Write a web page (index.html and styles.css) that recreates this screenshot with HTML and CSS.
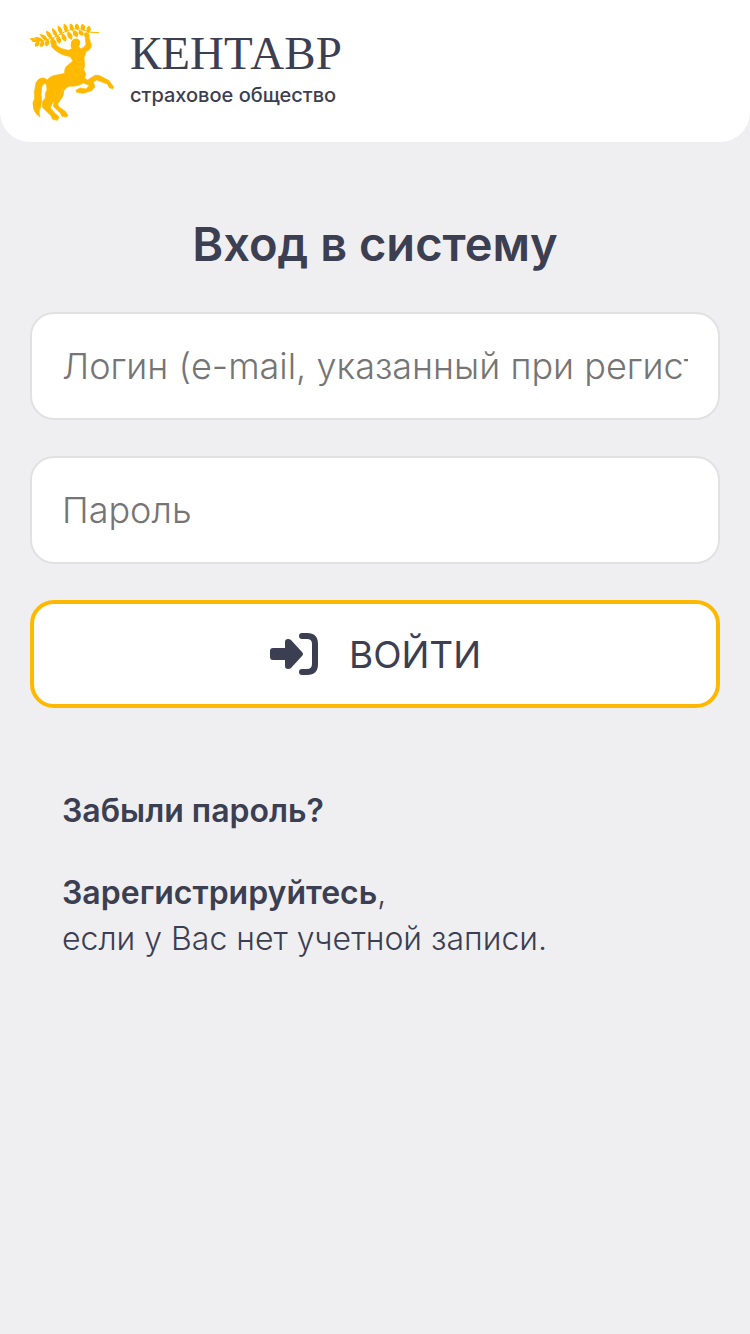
FILE: index.html
```html
<!DOCTYPE html>
<html lang="ru">
<head>
    <meta charset="UTF-8">
    <meta name="viewport" content="width=device-width, initial-scale=1.0">
    <title>Вход в систему</title>
    <link rel="stylesheet" href="styles.css">
</head>
<body>
    <header class="header">
        <a class="logo" href="#">
            <svg class="logo-mark" viewBox="30 24 258 294" aria-hidden="true">
                <!-- branch -->
                <path class="stem" d="M36 78 Q84 80 120 58 T182 42 Q212 56 237 53"/>
                <g class="leaves">
                    <path d="M54 79Q46 68 33 72Q40 82 54 79Z"/>
                    <path d="M67 78Q62 67 47 68Q55 79 67 78Z"/>
                    <path d="M80 74Q77 61 62 60Q69 74 80 74Z"/>
                    <path d="M94 69Q94 55 80 50Q82 66 94 69Z"/>
                    <path d="M109 63Q111 49 98 42Q98 57 109 63Z"/>
                    <path d="M124 57Q128 42 115 35Q114 50 124 57Z"/>
                    <path d="M140 50Q145 36 133 29Q130 44 140 50Z"/>
                    <path d="M157 46Q163 34 152 28Q147 39 157 46Z"/>
                    <path d="M173 44Q179 32 169 28Q162 37 173 44Z"/>
                    <path d="M190 46Q199 34 187 29Q180 38 190 46Z"/>
                    <path d="M205 52Q215 43 207 35Q197 42 205 52Z"/>
                    <path d="M56 80Q60 93 47 93Q43 86 56 80Z"/>
                    <path d="M69 79Q76 90 63 94Q58 86 69 79Z"/>
                    <path d="M83 74Q91 85 79 92Q72 83 83 74Z"/>
                    <path d="M98 69Q108 79 97 88Q88 79 98 69Z"/>
                    <path d="M113 63Q126 73 119 84Q106 75 113 63Z"/>
                    <path d="M128 58Q142 66 136 77Q122 70 128 58Z"/>
                    <path d="M145 52Q160 59 154 72Q139 65 145 52Z"/>
                    <path d="M162 48Q177 53 171 64Q156 62 162 48Z"/>
                    <path d="M178 47Q192 50 188 60Q174 58 178 47Z"/>
                </g>
                <!-- torso, raised arms and horse body -->
                <path class="body" d="M98 74L108 79L109 91Q122 103 145 106L156 101L153 92Q153 77 161 73Q171 69 178 76Q183 84 176 95L182 101Q195 98 198 87L195 63L191 56L200 52L208 59L207 67L214 91Q213 104 198 110L192 128L194 154L191 163L197 177L194 190L203 195L225 181L236 181L266 196L281 216L278 221L268 218L262 207L230 195L220 201L225 216L215 227L190 235L170 232L168 226L180 219L199 222L208 211L190 204Q165 217 150 213Q138 216 131 228Q132 244 120 256L113 267L117 276L137 290L144 302L138 306L126 304L121 294L100 274L103 258L96 266L91 278L103 293L117 306L112 316L98 313L93 302L67 277L68 259L76 249L76 235L81 225L79 207Q71 202 65 216L63 238Q67 255 62 276Q54 291 60 306L50 298Q38 283 39 263Q47 251 43 232L48 203Q56 187 72 189L82 195Q92 181 111 180L134 175Q133 163 138 155L159 138L151 125Q125 123 102 103L94 94L94 80Z"/>
                <g class="folds">
                    <path d="M151 111Q170 114 177 127M165 127Q169 150 190 139M171 107L175 118M166 151Q176 161 190 153M181 156L179 179M157 159Q158 179 174 184M80 212Q88 216 85 226M129 217Q121 248 105 260M103 222Q111 238 96 251L87 270M151 183Q148 202 168 207"/>
                </g>
            </svg>
            <span class="logo-text">
                <span class="logo-name">КЕНТАВР</span>
                <span class="logo-sub">страховое общество</span>
            </span>
        </a>
    </header>

    <main class="login">
        <h1>Вход в систему</h1>
        <form class="login-form">
            <input type="text" name="login" aria-label="Логин" placeholder="Логин (e-mail, указанный при регистрации)" required>
            <input type="password" name="password" aria-label="Пароль" placeholder="Пароль" required>
            <button type="submit">
                <svg class="enter-icon" viewBox="0 0 50 44" aria-hidden="true">
                    <path d="M4 16H16V10Q16 7 19 7Q21 7 22 8L33 20Q35 22 33 24L22 36Q21 37 19 37Q16 37 16 34V28H4Q1 28 1 25V19Q1 16 4 16Z"/>
                    <path class="bracket" d="M33 4H38Q46 4 46 12V32Q46 40 38 40H33"/>
                </svg>
                ВОЙТИ
            </button>
        </form>
        <div class="links">
            <p><a href="#">Забыли пароль?</a></p>
            <p><a href="#">Зарегистрируйтесь</a>,<br>если у Вас нет учетной записи.</p>
        </div>
    </main>
</body>
</html>
```
FILE: styles.css
```css
* {
    box-sizing: border-box;
}
body {
    margin: 0;
    background-color: #efeff1;
    color: #3c3e52;
    font-family: Inter, "Noto Sans", sans-serif;
    font-weight: 300;
}
.header {
    display: flex;
    padding: 23px 30px 21px;
    background-color: #fff;
    border-radius: 0 0 30px 30px;
}
.logo {
    display: flex;
    gap: 14px;
    color: inherit;
    text-decoration: none;
}
.logo-mark {
    width: 86px;
    height: 98px;
    fill: #ffb800;
}
.stem {
    fill: none;
    stroke: #ffb800;
    stroke-width: 3;
}
.leaves {
    stroke: #ffb800;
    stroke-width: 4;
}
.body {
    stroke: #ffb800;
    stroke-width: 2;
}
.folds {
    fill: none;
    stroke: #ffd25c;
    stroke-width: 1;
}
.logo-text {
    display: flex;
    flex-direction: column;
    padding-top: 2px;
}
.logo-name {
    font-family: "Liberation Serif", serif;
    font-size: 47px;
    font-weight: 400;
    line-height: 56px;
}
.logo-sub {
    padding-top: 2px;
    font-size: 20px;
    font-weight: 500;
    line-height: 24px;
}
.login {
    padding: 72px 30px;
}
h1 {
    margin: 0 0 38px;
    font-size: 47px;
    font-weight: 600;
    line-height: 60px;
    text-align: center;
}
.login-form {
    display: flex;
    flex-direction: column;
    gap: 36px;
}
input,
button {
    width: 100%;
    height: 108px;
    background-color: #fff;
    border-radius: 24px;
    color: inherit;
    font-family: inherit;
    font-size: 36px;
    font-weight: 300;
}
input {
    padding: 0 30px;
    border: 2px solid #e1e1e1;
}
input::placeholder {
    color: #757575;
}
button {
    display: flex;
    align-items: center;
    justify-content: center;
    gap: 30px;
    border: 4px solid #ffb800;
    font-size: 37px;
    font-weight: 400;
    cursor: pointer;
}
.enter-icon {
    width: 50px;
    height: 44px;
    fill: currentColor;
}
.bracket {
    fill: none;
    stroke: currentColor;
    stroke-width: 6;
    stroke-linecap: round;
}
.links {
    display: flex;
    flex-direction: column;
    gap: 36px;
    margin-top: 80px;
    padding: 0 32px;
    font-size: 32px;
    line-height: 46px;
}
.links p {
    margin: 0;
}
.links a {
    color: inherit;
    font-weight: 600;
    text-decoration: none;
}
```
